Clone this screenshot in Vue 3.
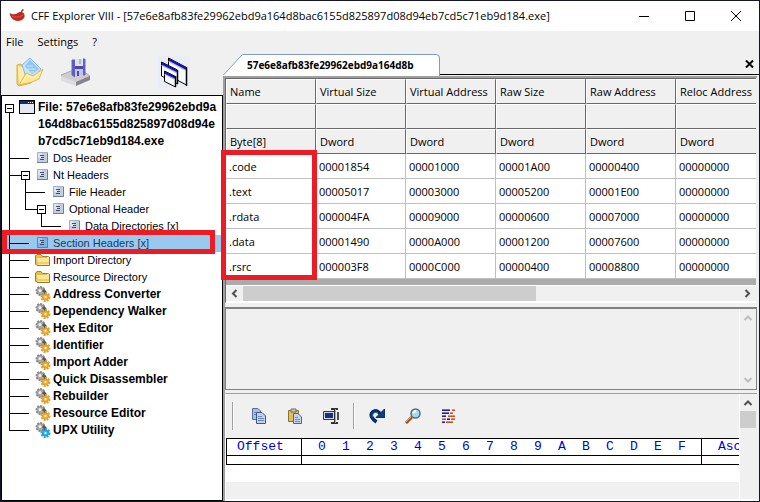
<script setup>
import { ref } from 'vue'

const hash = '57e6e8afb83fe29962ebd9a164d8bac6155d825897d08d94eb7cd5c71eb9d184.exe'
const selected = ref('Section Headers [x]')

// Connector cells are 16 x 17; the trunk runs through x = 7
const cells = {
  blank: '',
  pass: 'M7.5 0V17',
  tee: 'M7.5 0V17M7 8.5H16',
  end: 'M7.5 0V9M7 8.5H16',
  leaf: 'M0 8.5H11',
  open: 'M0 8.5H3M3.5 4.5H11.5V12.5H3.5ZM5 8.5H10M7.5 13V17'
}

const nodes = [
  { label: 'Dos Header', icon: 'page', guides: ['tee', 'leaf'] },
  { label: 'Nt Headers', icon: 'page', guides: ['tee', 'open'] },
  { label: 'File Header', icon: 'page', guides: ['pass', 'tee', 'leaf'] },
  { label: 'Optional Header', icon: 'page', guides: ['pass', 'end', 'open'] },
  { label: 'Data Directories [x]', icon: 'page', guides: ['pass', 'blank', 'end', 'leaf'] },
  { label: 'Section Headers [x]', icon: 'page', guides: ['tee', 'leaf'], marked: true },
  { label: 'Import Directory', icon: 'folder', guides: ['tee', 'leaf'] },
  { label: 'Resource Directory', icon: 'folder', guides: ['tee', 'leaf'] },
  { label: 'Address Converter', icon: 'gear', tool: true, guides: ['tee', 'leaf'] },
  { label: 'Dependency Walker', icon: 'gear', tool: true, guides: ['tee', 'leaf'] },
  { label: 'Hex Editor', icon: 'gear', tool: true, guides: ['tee', 'leaf'] },
  { label: 'Identifier', icon: 'gear', tool: true, guides: ['tee', 'leaf'] },
  { label: 'Import Adder', icon: 'gear', tool: true, guides: ['tee', 'leaf'] },
  { label: 'Quick Disassembler', icon: 'gear', tool: true, guides: ['tee', 'leaf'] },
  { label: 'Rebuilder', icon: 'gear', tool: true, guides: ['tee', 'leaf'] },
  { label: 'Resource Editor', icon: 'gear', tool: true, guides: ['tee', 'leaf'] },
  { label: 'UPX Utility', icon: 'gear', tool: true, blue: true, guides: ['end', 'leaf'] }
]

const columns = ['Name', 'Virtual Size', 'Virtual Address', 'Raw Size', 'Raw Address', 'Reloc Address']
const types = ['Byte[8]', 'Dword', 'Dword', 'Dword', 'Dword', 'Dword']
const sections = [
  ['.code', '00001854', '00001000', '00001A00', '00000400', '00000000'],
  ['.text', '00005017', '00003000', '00005200', '00001E00', '00000000'],
  ['.rdata', '000004FA', '00009000', '00000600', '00007000', '00000000'],
  ['.data', '00001490', '0000A000', '00001200', '00007600', '00000000'],
  ['.rsrc', '000003F8', '0000C000', '00000400', '00008800', '00000000']
]
const hexDigits = '0123456789ABCDEF'.split('')
</script>

<template>
  <div class="window">
    <header class="titlebar">
      <svg class="app-icon" width="17" height="14" viewBox="0 0 17 14">
        <path d="M0.500 4C2 5 5 6 8 4.500C10 2.500 13 2.500 15 4.500C17 8 14 12 9 12C4 12 1 8 0.500 4Z" fill="#c02a20" />
        <path d="M3 7C7 9 11 8 14 6" stroke="#e8574a" fill="none" />
        <path d="M12.500 4C12.500 2 13 1 14.500 0.500" stroke="#5c5a30" stroke-width="1.500" fill="none" />
      </svg>
      <h1>CFF Explorer VIII - [{{ hash }}]</h1>
      <div class="caption-buttons">
        <button aria-label="Minimize"><svg width="12" height="12"><path d="M1 6.500H11" /></svg></button>
        <button aria-label="Maximize"><svg width="12" height="12"><path d="M1.500 1.500H10.500V10.500H1.500Z" /></svg></button>
        <button aria-label="Close"><svg width="12" height="12"><path d="M1 1L11 11M11 1L1 11" /></svg></button>
      </div>
    </header>

    <nav class="menu">
      <button>File</button>
      <button>Settings</button>
      <button>?</button>
    </nav>

    <div class="main">
      <aside class="side">
        <div class="toolbar">
          <button aria-label="Open">
            <svg width="30" height="32" viewBox="0 0 30 32">
              <path d="M1 9L4 8L8 10L10 13L24 15L15 27L3 30L1 28Z" fill="#f3cf62" stroke="#dcae40" />
              <path d="M2 10L8 12V25L3 29Z" fill="#fdeeb0" />
              <path d="M14 2L25 13L19 21L9 18L6 9Z" fill="#c4e4fb" stroke="#86b9e8" />
              <path d="M14 4L23 13L16 18L9 10Z" fill="#8fc4f3" />
              <path d="M11 10H17M12 13H20M14 16H18" stroke="#b8dcfa" stroke-width="1.500" />
              <path d="M3 29L10 17L17 20L27 13L23 23L16 26Z" fill="#fce896" stroke="#e3b94d" />
              <path d="M6 26L11 19L17 22L25 16" stroke="#fff8cf" fill="none" />
            </svg>
          </button>
          <button aria-label="Save">
            <svg width="30" height="32" viewBox="0 0 30 32">
              <path d="M0 19L10 15H22L29 20L15 27L0 22Z" fill="#cdcdd0" stroke="#aaaab0" />
              <path d="M0 20L15 26V30L0 25Z" fill="#dedee0" />
              <path d="M15 26L29 20V24L15 30Z" fill="#85858b" />
              <path d="M11 4H14V21L11 19ZM22 3H24V19H22Z" fill="#5a58bd" stroke="#6a69ca" />
              <path d="M14 3H22V10H14Z" fill="#e2e2ec" /><path d="M14 10H22V13H14Z" fill="#4c4ab2" />
              <path d="M14 13H22V19L14 21Z" fill="#c4c4e4" /><path d="M16 15H18V20H16Z" fill="#4c4ab2" />
              <path d="M19 3V8" stroke="#8787a0" />
            </svg>
          </button>
          <button class="cascade" aria-label="Cascade windows">
            <svg width="32" height="32" viewBox="0 0 32 32">
              <path d="M0 0H32V32H0Z" fill="#e9eef6" />
              <path d="M10.500 2L28.500 11.500V29L10.500 19.500Z" fill="#f8f9fb" stroke="#000" />
              <path d="M11 4.500L28 13.500" stroke="#b9b9b9" stroke-width="3" />
              <path d="M11 3.500L28 12.500" stroke="#1010c0" stroke-width="2" />
              <path d="M3.500 6L19.500 14V28L3.500 20Z" fill="#f8f9fb" stroke="#000" />
              <path d="M4 8.500L19 16" stroke="#b9b9b9" stroke-width="3" />
              <path d="M4 7.500L19 15" stroke="#1010c0" stroke-width="2" />
              <path d="M6.500 15L17.500 20.500V31L6.500 25.500Z" fill="#f8f9fb" stroke="#000" />
              <path d="M7 17.500L17 22.500" stroke="#b9b9b9" stroke-width="3" />
              <path d="M7 16.500L17 21.500" stroke="#1010c0" stroke-width="2" />
              <path d="M28.500 11V30M19.500 14V28M17.500 20V31" stroke="#000" stroke-width="1.500" />
            </svg>
          </button>
        </div>

        <div class="tree" role="tree">
          <div class="root" role="treeitem">
            <svg class="root-guide" width="16" height="51" shape-rendering="crispEdges">
              <path d="M3.500 5.500H11.500V13.500H3.500ZM5 9.500H10M7.500 14V51" />
            </svg>
            <svg class="root-icon" width="16" height="14" shape-rendering="crispEdges">
              <path d="M0 0H16V14H0Z" fill="#000" /><path d="M1 1H15V4H1Z" fill="#102a86" />
              <path d="M1 4H15V13H1Z" fill="#e8e8f0" /><path d="M9 2H10V3H9ZM11 2H12V3H11ZM13 2H14V3H13Z" fill="#fff" />
            </svg>
            <span class="root-label">File: {{ hash }}</span>
          </div>
          <button
            v-for="n in nodes" :key="n.label" class="node" role="treeitem"
            :class="{ tool: n.tool, selected: selected === n.label }" @click="selected = n.label"
          >
            <svg v-for="(g, i) in n.guides" :key="i" class="guide" width="16" height="17" shape-rendering="crispEdges">
              <path :d="cells[g]" />
            </svg>
            <svg v-if="n.icon === 'page'" class="icon" width="16" height="16">
              <path d="M2.500 2.500H12.500V12.500H2.500Z" :fill="selected === n.label ? '#7fb2e0' : '#c3cede'" :stroke="selected === n.label ? '#4f8cc4' : '#a3b0c6'" />
              <path d="M3 3H7V8H3Z" :fill="selected === n.label ? '#9cc9ef' : '#dde5f0'" />
              <path d="M2 12.500H12.500V3" stroke="#6d7f9c" fill="none" />
              <path d="M5 5.500H9M6 7.500H9M5 9.500H9" stroke="#3c506e" />
            </svg>
            <svg v-else-if="n.icon === 'folder'" class="icon" width="16" height="16">
              <path d="M0.500 4L2 2.500H6L7.500 4.500H13.500V13.500H2L0.500 12Z" fill="#e5bd4e" stroke="#a7802a" />
              <path d="M2 6H12V5H14.500V13H3Z" fill="#fbe79a" /><path d="M3 13.500H14.500V5" stroke="#9c7726" fill="none" />
              <path d="M3 10H14V12H3Z" fill="#f2cf66" />
            </svg>
            <svg v-else class="icon" width="16" height="16">
              <circle cx="5.500" cy="5" r="4" fill="#a9a9a9" stroke="#8a8a8a" stroke-width="2" stroke-dasharray="2 1" />
              <circle cx="5" cy="4.500" r="1.500" fill="#eee" />
              <path d="M8 4L10 6V10" stroke="#585858" stroke-width="3" fill="none" />
              <circle cx="10.500" cy="11" r="3" :fill="n.blue ? '#35b8ee' : '#f0b435'" :stroke="n.blue ? '#1690cf' : '#d89a2a'" />
              <circle cx="10.500" cy="11" r="4" fill="none" :stroke="n.blue ? '#2b9edc' : '#daa034'" stroke-width="2" stroke-dasharray="2 1" />
              <circle cx="10.500" cy="11" r="1" fill="#fff" />
            </svg>
            <span>{{ n.label }}</span>
            <i v-if="n.marked" class="mark mark-row"></i>
          </button>
        </div>
      </aside>

      <section class="content">
        <div class="tabs">
          <button class="tab">
            <svg width="217" height="22" viewBox="0 0 217 22">
              <path d="M0 21.500L18 2Q19 0.500 21 0.500H213L216.500 3V22H0Z" fill="#fff" />
              <path d="M0 21.500L18 2Q19 0.500 21 0.500H213Q216.500 0.500 216.500 4V22" fill="none" stroke="#7f9db9" />
            </svg>
            <span>57e6e8afb83fe29962ebd9a164d8b</span>
          </button>
          <div class="tab-rest">
            <button aria-label="Close tab"><svg width="9" height="8"><path d="M1 0.500L8 7.500M8 0.500L1 7.500" /></svg></button>
          </div>
        </div>

        <div class="panes">
          <div class="grid-pane">
            <div class="grid-clip">
              <table class="sections">
                <thead>
                  <tr><th v-for="c in columns" :key="c">{{ c }}</th></tr>
                  <tr><th v-for="c in columns" :key="c"></th></tr>
                  <tr><th v-for="(t, i) in types" :key="i">{{ t }}</th></tr>
                </thead>
                <tbody>
                  <tr v-for="row in sections" :key="row[0]"><td v-for="(v, i) in row" :key="i">{{ v }}</td></tr>
                </tbody>
              </table>
            </div>
            <i class="mark mark-column"></i>
            <div class="hscroll">
              <svg width="17" height="15"><path d="M10.500 4L7 7.500L10.500 11" /></svg>
              <div class="track"><div class="thumb"></div></div>
              <svg width="17" height="15"><path d="M6.500 4L10 7.500L6.500 11" /></svg>
            </div>
          </div>

          <div class="note-pane">
            <div class="vscroll disabled">
              <svg width="16" height="17"><path d="M4.500 11L8 7.500L11.500 11" /></svg>
              <svg width="16" height="17"><path d="M4.500 6L8 9.500L11.500 6" /></svg>
            </div>
          </div>

          <div class="hex-pane">
            <div class="hex-body">
              <div class="hex-tools">
                <i class="sep tall"></i>
                <button aria-label="Copy">
                  <svg width="16" height="16">
                    <path d="M1.500 0.500H7L9.500 3V11.500H1.500Z" fill="#a9bddf" stroke="#5b7098" />
                    <path d="M5.500 4.500H11L14.500 8V15.500H5.500Z" fill="#c2d2ec" stroke="#3f5788" />
                    <path d="M7 8.500H11M7 10.500H13M7 12.500H13M3 4.500H5M3 6.500H5" stroke="#6b86b8" />
                  </svg>
                </button>
                <button aria-label="Paste">
                  <svg width="16" height="16">
                    <path d="M1.500 2.500H11.500V13.500H1.500Z" fill="#dcc258" stroke="#8a7330" />
                    <path d="M4 1H9V4H4Z" fill="#c8ccd0" stroke="#6b6b60" />
                    <path d="M6.500 5.500H11L14.500 9V15.500H6.500Z" fill="#c5d4ee" stroke="#4d6594" />
                    <path d="M8 9.500H11M8 11.500H13M8 13.500H13" stroke="#7890bc" />
                  </svg>
                </button>
                <button aria-label="Fill">
                  <svg width="16" height="16">
                    <path d="M0.500 3.500H12.500V11.500H0.500Z" fill="#d6d6d6" stroke="#3c3c3c" /><path d="M2 5H10V10H2Z" fill="#14308c" />
                    <path d="M8 1H15M8 15H15M12 1V15" stroke="#303030" stroke-width="2" /><path d="M12.500 1V15" stroke="#aaa" />
                    <path d="M15 4V12" stroke="#505050" stroke-width="2" />
                  </svg>
                </button>
                <i class="sep"></i>
                <button aria-label="Go to">
                  <svg width="16" height="16">
                    <path d="M7.500 14C3 11 0.500 7 3.500 4C6 2 9 3 11.500 6" fill="none" stroke="#0b2e66" stroke-width="3.500" />
                    <path d="M15.500 1V9.500H7Z" fill="#0b3f86" stroke="#0b2e66" /><path d="M4 9C2.500 6 6 3 9 5" fill="none" stroke="#2e79c4" />
                  </svg>
                </button>
                <button aria-label="Find">
                  <svg width="16" height="16">
                    <path d="M1 15L7 9" stroke="#a45320" stroke-width="3" /><path d="M1 14L6 9" stroke="#e29a56" />
                    <circle cx="10.500" cy="5.500" r="4.500" fill="#a5dbe8" stroke="#566d84" stroke-width="1.500" /><path d="M8 5L11 2.500" stroke="#fff" stroke-width="2" />
                  </svg>
                </button>
                <button aria-label="Compare">
                  <svg width="16" height="16" shape-rendering="crispEdges">
                    <path d="M1 2H9M1 8H5M6 11H9M1 14H4M1 5H8" stroke="#2a1c9c" stroke-width="2" />
                    <path d="M11 2H14M9 5H12M7 8H14M1 11H5M10 11H14M5 14H12" stroke="#c65228" stroke-width="2" />
                    <path d="M1 1.500H14M1 4.500H14M1 7.500H14M1 10.500H14M1 13.500H14" stroke="#f0f0f0" stroke-opacity="0.4" />
                  </svg>
                </button>
              </div>
              <div class="hex-view">
                <table class="hex">
                  <thead>
                    <tr><th class="offset">Offset</th><th v-for="d in hexDigits" :key="d" class="digit">{{ d }}</th><th class="ascii">Ascii</th></tr>
                  </thead>
                  <tbody>
                    <tr><td></td><td class="bytes" colspan="16"></td><td></td></tr>
                  </tbody>
                </table>
              </div>
            </div>
            <div class="vscroll">
              <svg width="16" height="17"><path d="M4.500 11L8 7.500L11.500 11" /></svg>
              <div class="vthumb"></div>
            </div>
          </div>
        </div>
      </section>
    </div>
  </div>
</template>

<style>
body { margin: 0; background: #15152a; }
</style>

<style scoped>
* { box-sizing: border-box; }
button { border: 0; padding: 0; margin: 0; background: none; font: inherit; color: inherit; text-align: left; }
svg { display: block; flex: none; }

.window {
  display: flex; flex-direction: column; min-height: 100vh;
  border: 1px solid #15152a; background: #f0f0f0; color: #000;
  font: 11px/16px "Open Sans", "Noto Sans", sans-serif;
}
.titlebar { display: flex; align-items: center; height: 30px; background: #fff; padding-left: 8px; }
.titlebar h1 { flex: 1; min-width: 0; margin: 0 0 0 5px; font-size: 11px; font-weight: 400; white-space: nowrap; overflow: hidden; }
.caption-buttons { display: flex; }
.caption-buttons button { width: 46px; height: 30px; display: flex; align-items: center; justify-content: center; }
.caption-buttons svg { fill: none; stroke: #000; }
.menu { display: flex; gap: 14px; height: 21px; align-items: center; padding-left: 5px; }

.main { flex: 1; display: grid; grid-template-columns: 222px minmax(0, 1fr); }
.side { display: flex; flex-direction: column; }
.toolbar { display: flex; align-items: center; gap: 15px; height: 43px; padding: 0 0 3px 15px; }
.cascade { margin-left: 52px; }

.tree {
  flex: 1; border: 1px solid #000; background: #fff; padding-top: 3px;
  font: 11px/17px "Liberation Sans", Arial, sans-serif;
}
.root { display: flex; font-size: 12px; font-weight: 700; }
.root-guide, .guide { fill: none; stroke: #000; }
.root-icon { margin: 1px 3px 0 1px; }
.root-label { flex: 1; min-width: 0; word-break: break-all; height: 51px; }
.node { position: relative; display: flex; align-items: flex-start; width: 100%; height: 17px; white-space: nowrap; }
.node .icon { margin: 0 2px 0 1px; }
.node.tool { font-size: 12px; font-weight: 700; }
.node.selected { background: #99c9ef; color: #173a5e; }

/* Red annotation frames drawn over the interface */
.mark { position: absolute; border: 5px solid #ed1c24; pointer-events: none; z-index: 2; }
.mark-row { top: -5px; bottom: -2px; left: 0; right: 7px; }
.mark-column { top: 71px; left: -5px; width: 96px; height: 130px; }

.content { display: flex; flex-direction: column; min-width: 0; }
.tabs { display: flex; height: 24px; padding-top: 2px; }
.tab { position: relative; }
.tab span { position: absolute; left: 24px; top: 3px; font: bold 10px/16px "Open Sans", "Liberation Sans", sans-serif; }
.tab-rest { flex: 1; display: flex; justify-content: flex-end; align-items: center; padding-right: 5px; border-bottom: 1px solid #000; height: 21px; }
.tab-rest svg { stroke: #000; stroke-width: 2; }

.panes {
  flex: 1; display: flex; flex-direction: column; margin-right: 2px;
  border-top: 2px solid #a0a0a0; border-left: 2px solid #a0a0a0;
}
.grid-pane { position: relative; border-top: 1px solid #696969; border-left: 1px solid #696969; border-bottom: 1px solid #fff; margin-right: 1px; }
.grid-clip { overflow: hidden; background: #ababab; padding-bottom: 6px; }
.sections { border-collapse: separate; border-spacing: 0; table-layout: fixed; width: 540px; }
.sections th, .sections td { width: 90px; height: 25px; text-align: left; font-weight: 400; white-space: nowrap; }
.sections th { padding: 0 0 0 3px; background: #f0f0f0; border: 1px solid #696969; border-top-color: #fff; border-left-color: #fff; }
.sections td { padding: 2px 0 0 3px; background: #fff; border-right: 1px solid #c0c0c0; border-bottom: 1px solid #c0c0c0; }
.hscroll { display: flex; align-items: center; height: 17px; background: #f0f0f0; border-top: 1px solid #fff; border-bottom: 1px solid #fff; }
.hscroll svg, .vscroll svg { fill: none; stroke: #505050; stroke-width: 2; }
.track { flex: 1; }
.thumb { width: 59%; height: 15px; background: #cdcdcd; }

.note-pane { display: flex; justify-content: flex-end; height: 83px; margin-top: 4px; border: 1px solid #828282; border-top: 2px solid #828282; }
.vscroll { width: 17px; border-left: 1px solid #fff; background: #f0f0f0; }
.disabled { display: flex; flex-direction: column; justify-content: space-between; }
.disabled svg { stroke: #bfbfbf; }

.hex-pane { flex: 1; display: flex; margin-top: 3px; border-top: 1px solid #a0a0a0; border-left: 1px solid #fff; border-bottom: 2px solid #fff; padding-right: 1px; }
.hex-body { flex: 1; min-width: 0; }
.hex-tools { display: flex; align-items: center; gap: 20px; height: 44px; padding-left: 6px; }
.sep { width: 2px; height: 26px; margin-left: -6px; border-left: 1px solid #a0a0a0; border-right: 1px solid #fff; }
.sep + button { margin-left: -6px; }
.sep.tall { height: 28px; margin-left: 0; }
.sep.tall + button { margin-left: -3px; }
.hex-view { overflow: hidden; background: #fff; padding-bottom: 17px; }
.hex { border-collapse: separate; border-spacing: 0; table-layout: fixed; width: 576px; border-top: 1px solid #000; border-left: 1px solid #000; font: 13px/16px "Liberation Mono", "Courier New", monospace; color: #0000d8; }
.hex th { padding: 0; height: 17px; font-weight: 400; border-bottom: 1px solid #000; }
.hex td { padding: 0; height: 9px; border-bottom: 1px solid #000; }
.hex .offset { width: 75px; text-align: left; padding-left: 10px; border-right: 1px solid #000; }
.hex td:first-child { border-right: 1px solid #000; }
.hex .digit { width: 24px; }
.hex .digit:nth-child(2) { width: 32px; padding-left: 8px; }
.hex .digit:nth-child(17) { width: 32px; padding-right: 7px; border-right: 1px solid #000; }
.bytes { border-right: 1px solid #000; }
.hex .ascii { text-align: left; padding-left: 16px; }
.vthumb { height: 17px; background: #cdcdcd; }
</style>
